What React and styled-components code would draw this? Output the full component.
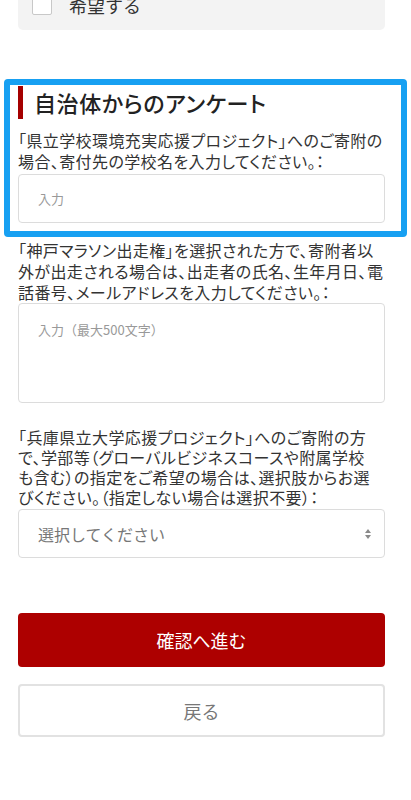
import React from "react";
import styled, { createGlobalStyle } from "styled-components";

const Global = createGlobalStyle`
  html, body { margin: 0; padding: 0; background: #fff; }
  body {
    font-family: "Noto Sans CJK JP", "Noto Sans", sans-serif;
    color: #333;
    overflow: hidden;
  }
  * { box-sizing: border-box; }
`;

const Page = styled.div`
  padding: 0 26px 40px 18px;
  display: flex;
  flex-direction: column;
`;

const OptionBox = styled.div`
  margin-top: -25px;
  background: #f3f3f3;
  border-radius: 5px;
  padding: 18px 14px 13px;
  display: flex;
  align-items: center;
  gap: 17px;
`;

const CheckBox = styled.span`
  width: 20px;
  height: 20px;
  border: 1px solid #c8c8c8;
  border-radius: 2px;
  background: #fff;
  flex: none;
`;

const OptionText = styled.span`
  font-size: 18px;
  line-height: 24px;
  color: #333;
`;

const Highlight = styled.section`
  margin: 49px -22px 0 -14px;
  border: 6px solid #17a0f2;
  border-radius: 4px;
  padding: 1px 16px 8px 8px;
`;

const Heading = styled.h2`
  margin: 0 0 11px;
  border-left: 5px solid #a50000;
  padding-left: 11px;
  font-size: 22px;
  line-height: 33px;
  font-weight: 500;
  color: #222;
  font-feature-settings: "palt";
  letter-spacing: 0.6px;
`;

const Field = styled.div`
  margin-top: ${(p) => p.$gap || 0}px;
  display: flex;
  flex-direction: column;
`;

const Label = styled.div`
  font-size: 16px;
  line-height: ${(p) => p.$lh || 21}px;
  color: #333;
  white-space: nowrap;
  font-feature-settings: "palt";
  letter-spacing: ${(p) => p.$ls ?? 0.4}px;
  margin-bottom: ${(p) => p.$mb ?? 2}px;
`;

const TextInput = styled.div`
  height: 49px;
  border: 1px solid #dcdcdc;
  border-radius: 4px;
  background: #fff;
  padding: 0 19px;
  display: flex;
  align-items: center;
  font-size: 13px;
  color: #999;
`;

const TextArea = styled.div`
  height: 100px;
  border: 1px solid #dcdcdc;
  border-radius: 4px;
  background: #fff;
  padding: 16px 19px;
  font-size: 13px;
  line-height: 20px;
  color: #999;
`;

const Select = styled.div`
  height: 49px;
  border: 1px solid #dcdcdc;
  border-radius: 4px;
  background: #fff;
  padding: 0 12px 0 19px;
  display: flex;
  align-items: center;
  justify-content: space-between;
  font-size: 16px;
  color: #777;
`;

const Buttons = styled.div`
  margin-top: 55px;
  display: flex;
  flex-direction: column;
  gap: 17px;
`;

const Button = styled.button`
  height: ${(p) => (p.$primary ? 54 : 53)}px;
  border-radius: 4px;
  border: ${(p) => (p.$primary ? "none" : "2px solid #e2e2e2")};
  background: ${(p) => (p.$primary ? "#ad0000" : "#fff")};
  color: ${(p) => (p.$primary ? "#fff" : "#777")};
  font-family: inherit;
  font-size: 18px;
  display: flex;
  align-items: center;
  justify-content: center;
  padding: 0;
  width: 100%;
`;

const Arrows = () => (
  <svg width="8" height="12" viewBox="0 0 8 12">
    <path d="M4 1 L7 5 L1 5 Z" fill="#8a8a8a" />
    <path d="M4 11 L7 7 L1 7 Z" fill="#8a8a8a" />
  </svg>
);

export default function App() {
  return (
    <>
      <Global />
      <Page>
        <OptionBox>
          <CheckBox />
          <OptionText>希望する</OptionText>
        </OptionBox>

        <Highlight>
          <Heading>自治体からのアンケート</Heading>
          <Field>
            <Label>
              「県立学校環境充実応援プロジェクト」へのご寄附の<br />
              場合、寄付先の学校名を入力してください。：
            </Label>
            <TextInput>入力</TextInput>
          </Field>
        </Highlight>

        <Field $gap={3}>
          <Label $mb={0}>
            「神戸マラソン出走権」を選択された方で、寄附者以<br />
            外が出走される場合は、出走者の氏名、生年月日、電<br />
            話番号、メールアドレスを入力してください。：
          </Label>
          <TextArea>入力（最大500文字）</TextArea>
        </Field>

        <Field $gap={24}>
          <Label $lh={20}>
            「兵庫県立大学応援プロジェクト」へのご寄附の方<br />
            で、学部等（グローバルビジネスコースや附属学校<br />
            も含む）の指定をご希望の場合は、選択肢からお選<br />
            びください。（指定しない場合は選択不要）：
          </Label>
          <Select>
            <span>選択してください</span>
            <Arrows />
          </Select>
        </Field>

        <Buttons>
          <Button $primary>確認へ進む</Button>
          <Button>戻る</Button>
        </Buttons>
      </Page>
    </>
  );
}
